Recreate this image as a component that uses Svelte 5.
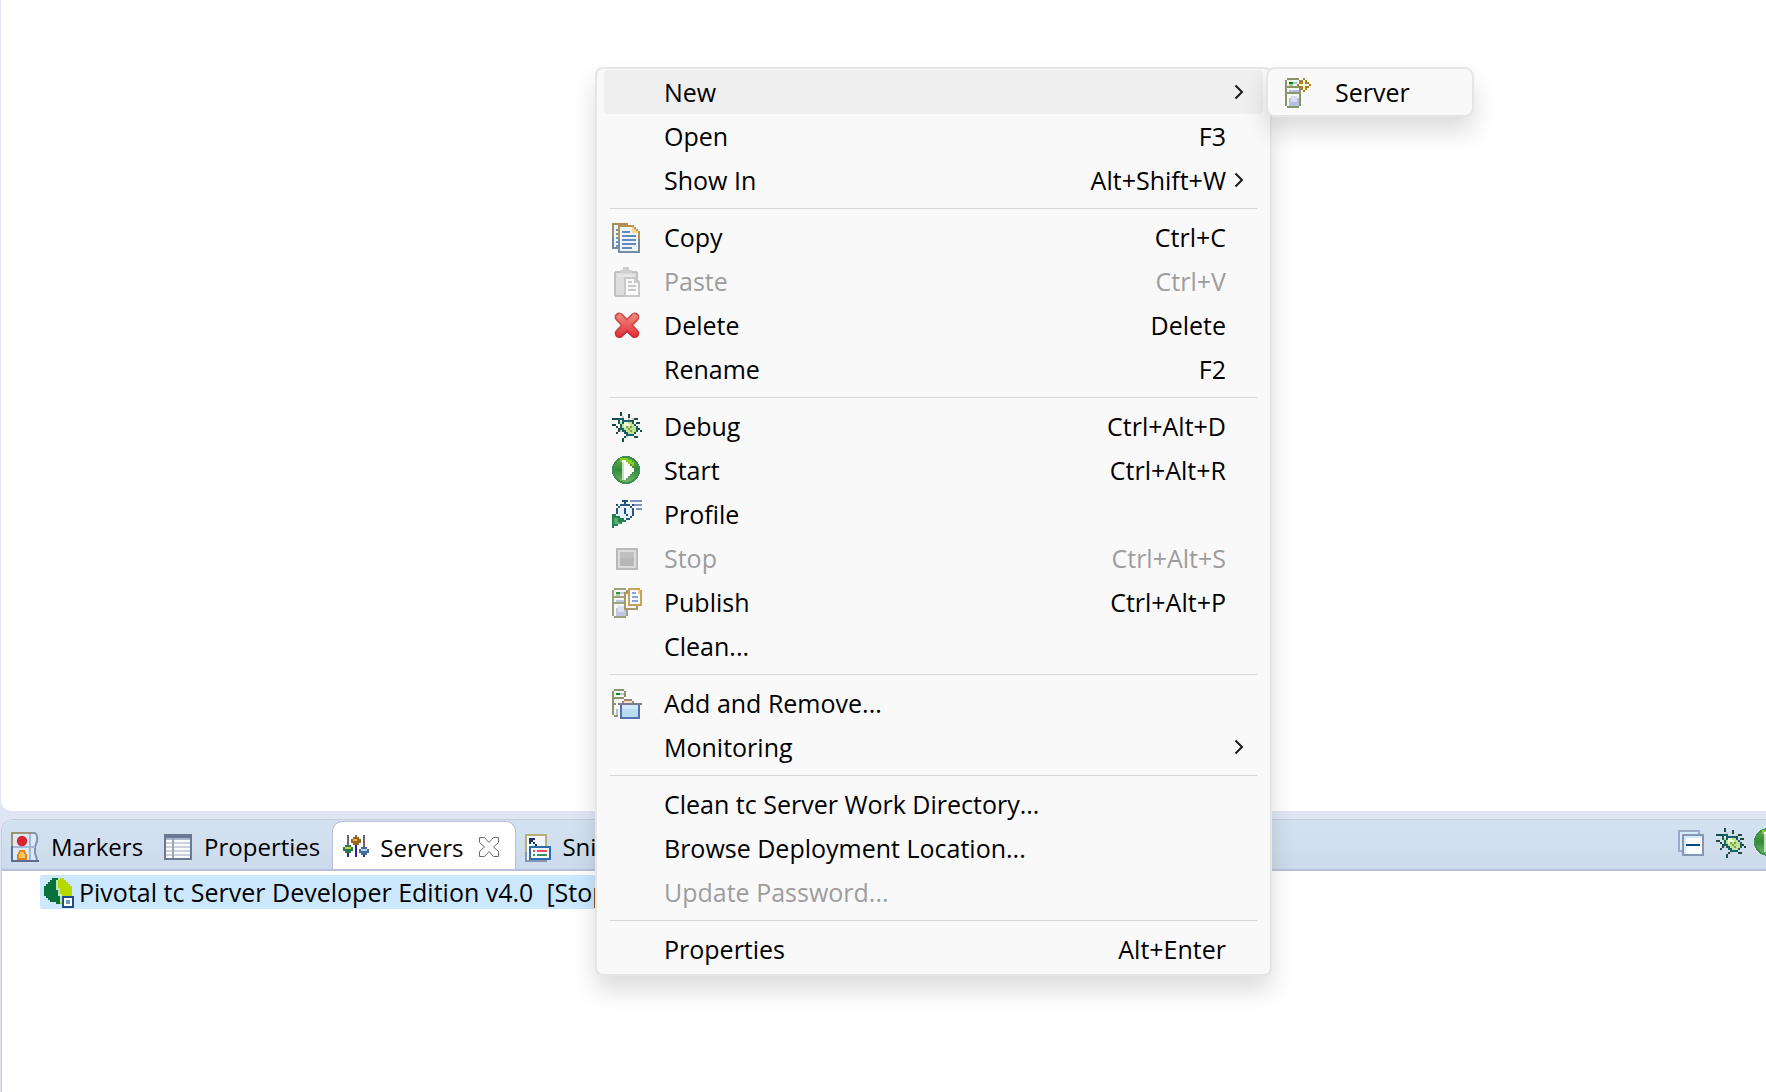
<script>
  const groups = [
    [
      { label: 'New', sub: true, active: true },
      { label: 'Open', key: 'F3' },
      { label: 'Show In', key: 'Alt+Shift+W', sub: true }
    ],
    [
      { label: 'Copy', key: 'Ctrl+C', icon: 'copy' },
      { label: 'Paste', key: 'Ctrl+V', icon: 'paste', disabled: true },
      { label: 'Delete', key: 'Delete', icon: 'delete' },
      { label: 'Rename', key: 'F2' }
    ],
    [
      { label: 'Debug', key: 'Ctrl+Alt+D', icon: 'bug' },
      { label: 'Start', key: 'Ctrl+Alt+R', icon: 'start' },
      { label: 'Profile', icon: 'profile' },
      { label: 'Stop', key: 'Ctrl+Alt+S', icon: 'stop', disabled: true },
      { label: 'Publish', key: 'Ctrl+Alt+P', icon: 'publish' },
      { label: 'Clean...' }
    ],
    [
      { label: 'Add and Remove...', icon: 'modules' },
      { label: 'Monitoring', sub: true }
    ],
    [
      { label: 'Clean tc Server Work Directory...' },
      { label: 'Browse Deployment Location...' },
      { label: 'Update Password...', disabled: true }
    ],
    [{ label: 'Properties', key: 'Alt+Enter' }]
  ];
  const tabs = [
    { label: 'Markers', icon: 'markers' },
    { label: 'Properties', icon: 'properties' },
    { label: 'Servers', icon: 'servers', active: true },
    { label: 'Snippets', icon: 'snippets' }
  ];
</script>

{#snippet tower()}
  <path fill="#8b946c" d="M1 1h6v1h1v13H7v1H1v-1H0V2h1z" />
  <path fill="#f6f8f4" d="M1 2h6v3H1zM1 6h6v2H1zM1 9h6v6H1z" />
  <path fill="#0a8a12" d="M2 3h2v1H2z" />
  <path fill="#9fd0a4" d="M2 4h2v1H2z" />
  <path fill="#b5bfe0" d="M4 3h2v1H4zM2 7h5v1H2zM2 11h5v4H2z" />
  <path fill="#d7dcf1" d="M3 10h3v3H3z" />
{/snippet}

{#snippet icon(name)}
  <svg class="icon" viewBox="0 0 16 16" aria-hidden="true">
    {#if name === 'copy'}
      <path fill="#a9905b" d="M0 1h8v2H0z" /><path fill="#9a9078" d="M0 2h1v6H0z" />
      <path fill="#7189a6" d="M0 8h1v6H0zM0 13h4v1H0z" /><path fill="#eef6fb" d="M1 2h3v11H1z" />
      <path fill="#6d91bd" d="M2 4h1v1H2zM2 6h1v1H2zM2 8h1v1H2zM2 10h1v1H2zM2 12h1v1H2z" />
      <path fill="#b5944f" d="M3 2h8v1h1v1h1v1h1v4H3z" /><path fill="#748ba7" d="M3 9h11v7H3z" />
      <path fill="#eef6fb" d="M4 3h6v3h3v9H4z" /><path fill="#f3d98c" d="M10 3h1v1h1v1h1v1h-3z" />
      <path fill="#6488bb" d="M5 5h4v1H5zM5 7h7v1H5zM5 9h7v1H5zM5 11h7v1H5zM5 13h5v1H5z" />
    {:else if name === 'paste'}
      <rect x="1.5" y="3.5" width="11" height="12" rx=".8" fill="#dedede" stroke="#c1c1c1" />
      <path fill="#cecece" d="M4 4V2.5h1.5V1.2h3v1.3H10V4z" /><path fill="#e9e9e9" d="M3 5h8v1H3z" />
      <path fill="#fafafa" stroke="#c8c8c8" d="M6.5 6.5h5l2 2v7h-7z" />
      <path fill="#c8c8c8" d="M11 6h1v2h2v1h-3zM8 8h2v1H8zM8 10h4v1H8zM8 12h4v1H8z" />
    {:else if name === 'delete'}
      <defs><linearGradient id="red" x2="0" y2="1"><stop stop-color="#f28a83" /><stop offset="1" stop-color="#e2323a" /></linearGradient></defs>
      <g shape-rendering="auto">
        <path stroke="#cb4a43" stroke-width="4.6" stroke-linecap="round" d="m3.6 4 7.8 8.2M11.4 4 3.6 12.2" />
        <path fill="#cf2a35" d="m9.6 8.2 4 3.4-1 2.4-2 .5-3.1-2.8-3 2.8-2-.4-1-2.3 4-3.6z" />
        <path fill="url(#red)" d="M3.4 2.4h.8l3.3 3.5 3.3-3.5h.8l1.3 1.3v.8L9.6 8.1l3.3 3.4v.9l-1.3 1.3h-.8L7.5 10.3l-3.3 3.4h-.8l-1.3-1.3v-.9l3.3-3.4-3.3-3.6v-.8z" />
      </g>
    {:else if name === 'bug'}
      <path fill="#dccaca" d="M5 3h1v1H5zM8 4h1v1H8zM12 6h1v1h-1zM4 10h1v1H4zM7 13h1v1H7zM10 4h1v1h-1z" />
      <path fill="#1d4a40" d="M4 1h1v2H4zM8 2h1v2H8zM0 4h3v1H0zM11 4h2v1h-2zM10 5h1v1h-1zM0 7h2v1H0zM2 8h1v1H2zM12 6h2v1h-2zM3 9h1v2H3zM2 11h1v1H2zM13 9h1v1h-1zM14 10h1v1h-1zM11 13h2v1h-2zM6 13h1v1H6zM5 14h1v2H5z" />
      <path fill="#15616b" d="M3 4h3v1h4v1h1v1h1v1h1v3h-1v1h-1v1H7v-1H6v-1H5v-1H4V7H3z" />
      <path fill="#c5e08f" d="M4 5h1v2H4zM6 6h4v1h1v1h1v3h-1v1H8v-1H7v-1H6V9H5V7h1z" />
      <path fill="#eaf5d2" d="M4 5h1v1H4zM6 6h2v1h1v1H8v1H6z" />
      <path fill="#72a64d" d="M7 8h1v1H7zM8 9h1v1H8zM9 10h1v1H9zM9 8h1v1H9z" />
    {:else if name === 'start'}
      <defs><linearGradient id="green" x2="0" y2="1"><stop stop-color="#6cac4c" /><stop offset=".5" stop-color="#338a39" /><stop offset="1" stop-color="#72bb6c" /></linearGradient></defs>
      <circle cx="7" cy="8" r="6.5" fill="url(#green)" stroke="#3d8f4f" />
      <path fill="#86cf21" d="M4 2h4v1h2v1h1v2h-1V5H8V4H7V3H5v1H4z" />
      <path fill="#fff" d="M5 3h2v1h1v1h1v1h1v1h1v2h-1v1H9v1H8v1H7v1H5z" />
      <path fill="#c9dfc4" d="M5 4h1v9H5z" />
    {:else if name === 'profile'}
      <path fill="#e6f2fd" d="M4 4h5v1h1v5H9v1H4V9H3V5h1z" />
      <path fill="#2a5585" d="M4 3h5v1H4zM3 4h1v1H3zM9 4h1v1H9zM2 5h1v3H2zM10 5h1v4h-1zM9 9h1v1H9zM7 10h2v1H7z" />
      <path fill="#204b7d" d="M5 1h3v1H5zM6 2h1v1H6zM2 3h1v1H2zM10 3h1v1h-1zM6 5h1v3H6zM7 8h1v1H7z" />
      <path fill="#7a94c4" d="M9 1h6v1H9zM11 3h4v1h-4zM12 5h3v1h-3z" />
      <path fill="#23814a" d="M0 8h2v1h2v1h2v1h1v1H5v1H3v1H1v1H0z" /><path fill="#57ac74" d="M1 10h2v2h1v1H1z" />
    {:else if name === 'stop'}
      <path fill="#b9b9b9" d="M2 3h11v11H2z" /><path fill="#dcdcdc" d="M3 4h9v9H3z" /><path fill="#b7b7b7" d="M4 5h7v7H4z" />
      <path fill="#c0c0c0" d="M4 5h7v3H4z" />
    {:else if name === 'publish'}
      <g opacity=".85">{@render tower()}</g>
      <path fill="#ab9668" d="M6 3h7v9H6z" /><path fill="#f8fafc" d="M7 4h5v7H7z" />
      <path fill="#c4a45a" d="M8 1h6v1h1v8H8z" /><path fill="#f7fafe" d="M9 2h4v1h1v6H9z" />
      <path fill="#f0cc70" d="M13 2h1v2h-1z" /><path fill="#8aa5d2" d="M10 3h2v1h-2zM10 5h3v1h-3zM10 7h3v1h-3z" />
    {:else if name === 'modules'}
      <path fill="#8b946c" d="M1 1h5v1h1v3H2v4H1v5h2v1H1v-1H0V2h1z" /><path fill="#f6f8f4" d="M1 2h5v3H1zM1 6h3v2H1zM1 9h2v5H1z" />
      <path fill="#0a8a12" d="M2 3h2v1H2z" /><path fill="#b5bfe0" d="M4 3h2v1H4zM2 11h1v3H2z" />
      <path fill="#8b946c" d="M2 5h4v1H2z" />
      <path fill="#9d8479" d="M6 6h4v1h1v1H5V7h1z" /><path fill="#f6dcbc" d="M6 7h4v1H6z" />
      <path fill="#7b7b93" d="M3 8h12v1H3z" /><path fill="#5470b4" d="M4 9h10v7H4z" />
      <path fill="#b9dcf1" d="M5 9h8v6H5z" /><path fill="#d2e8f6" d="M5 9h8v2H5z" />
    {:else if name === 'new-server'}
      {@render tower()}
      <path fill="#ae8317" d="M9 1h1v1h1v1h1v1h1v1h-1v1h-1v1h-1v1H9V7H8V6H7V5H6V4h1V3h1V2h1z" />
      <path fill="#fffbe7" d="M9 2h1v2h2v1h-2v2H9V5H7V4h2z" />
    {:else if name === 'markers'}
      <path fill="#dceaf8" d="M1 2h12l-1 5 1 8H1z" /><path fill="#9b9670" d="M0 1h11v1H1v6H0z" />
      <path fill="#606b8f" d="M0 8h1v7h13v1H0z" /><path fill="none" stroke="#8391b4" shape-rendering="auto" d="M10 1.5h2q1.5 1 1 4l-1 3v3l1 3.5" />
      <path fill="#a4b7d5" d="M9 2h1v13H9zM1 8h11v1H1z" /><circle cx="5.5" cy="5.5" r="2.6" fill="#da2530" shape-rendering="auto" />
      <path fill="#fac858" stroke="#df8620" d="M3.5 14.5v-2l1-2h2l1 2v2z" />
    {:else if name === 'properties'}
      <path fill="#6a7890" d="M0 2h14v13H0z" /><path fill="#aab7cf" d="M1 4h12v1H1z" /><path fill="#fafbfd" d="M1 5h12v9H1z" />
      <path fill="#ccd2dc" d="M1 6h12v1H1zM1 8h12v1H1zM1 10h12v1H1zM1 12h12v1H1z" /><path fill="#9aa6ba" d="M4 4h1v10H4z" />
    {:else if name === 'servers'}
      <path fill="#735f74" d="M2 2h1v5H2zM6 2h1v2H6zM10 2h1v6h-1z" /><path fill="#2525a0" d="M2 10h1v3H2zM6 7h1v6H6zM10 12h1v1h-1z" />
      <path fill="#2d774e" d="M1 7h3v1h1v2H4v1H1v-1H0V8h1z" /><path fill="#b9d74b" d="M1 8h3v1H1z" />
      <path fill="#97671b" d="M5 3h3v1h1v2H8v1H5V6H4V4h1z" /><path fill="#e7b94d" d="M5 4h2v1H5z" />
      <path fill="#47699e" d="M9 8h3v1h1v2h-1v1H9v-1H8V9h1z" /><path fill="#abd8ee" d="M9 9h3v1H9z" />
    {:else if name === 'snippets'}
      <path fill="#b6ae7d" d="M0 2h11v6h-1V3H1v12H0z" /><path fill="#8393b3" d="M0 11h1v4h10v1H0z" /><path fill="#f1f7fc" d="M1 3h9v12H1z" />
      <path fill="#1e3260" d="M2 4h3v1H4v1h1v1h1v1H5V7H4V6H3v1H2zM6 8h1v1H6z" />
      <path fill="#2e6dad" d="M2 8h11v7H2z" /><path fill="#f7fbff" d="M3 9h9v5H3z" />
      <path fill="#e45360" d="M4 10h1v1H4zM6 10h5v1H6z" /><path fill="#33915b" d="M4 12h1v1H4zM6 12h5v1H6z" />
    {:else if name === 'collapse'}
      <path fill="#9ca8c6" d="M0 2h11v11H0z" /><path fill="#d4eefd" d="M1 3h9v9H1z" />
      <path fill="#8795b2" d="M2 4h11v11H2z" /><path fill="#d4edfd" d="M3 5h9v9H3z" /><path fill="#fafdff" d="M4 6h8v8H4z" />
      <path fill="#054582" d="M4 9h7v1H4z" />
    {:else if name === 'pivotal'}
      <path fill="#08713c" d="M4 1h3v1H6v5h1v3h1v4H6v-1H3v-1H2v-1H1v-1H0V5h1V4h1V3h1V2h1z" />
      <path fill="#bfe3c1" d="M7 1h1v1H7v4h1v4h1v3H8v-3H7V7H6V2h1z" />
      <path fill="#b5d900" d="M8 1h2v1h1v1h1v1h1v1h1v5h-3v1h-1v3H8v-1h1V9H8V6H7V2h1z" />
      <path fill="#1d4d90" d="M9 10h6v6H9z" /><path fill="#fff" d="M10 11h4v4h-4z" /><path fill="#6d93c7" d="M11 12h2v2h-2z" />
    {/if}
  </svg>
{/snippet}

{#snippet chevron()}
  <svg class="chevron" viewBox="0 0 10 16" aria-hidden="true"><path d="m1.5 1.5 6.5 6.5-6.5 6.5" /></svg>
{/snippet}

<main class="workbench">
  <section class="editor" aria-label="Editor area"></section>

  <section class="views">
    <header class="tabbar">
      <div class="tabs" role="tablist">
        {#each tabs as tab}
          <div class="tab" class:current={tab.active}>
            <button class="tab-button" role="tab" aria-selected={!!tab.active}>
              {@render icon(tab.icon)}<span class="tab-label">{tab.label}</span>
            </button>
            {#if tab.active}
              <button class="close" aria-label="Close Servers">
                <svg viewBox="0 0 20 20" aria-hidden="true"><path d="M.5.5h5l4.5 5 4.5-5h5v5l-5 4.5 5 4.5v5h-5l-4.5-5-4.5 5h-5v-5l5-4.5-5-4.5z" /></svg>
              </button>
            {/if}
          </div>
        {/each}
      </div>
      <div class="toolbar">
        <button aria-label="Collapse All">{@render icon('collapse')}</button>
        <button aria-label="Debug server">{@render icon('bug')}</button>
        <button aria-label="Start server">{@render icon('start')}</button>
      </div>
    </header>
    <div class="tree">
      <button class="server">{@render icon('pivotal')}<span class="server-name">Pivotal tc Server Developer Edition v4.0&nbsp; [Stopped]</span></button>
    </div>
  </section>

  <div class="menu popup" role="menu">
    {#each groups as group, i}
      {#if i > 0}<hr />{/if}
      {#each group as item}
        <button class="item" class:hover={item.active} role="menuitem" disabled={item.disabled}>
          <span class="slot">{#if item.icon}{@render icon(item.icon)}{/if}</span>
          <span class="label">{item.label}</span>
          <span class="key">{item.key ?? ''}</span>
          <span class="arrow">{#if item.sub}{@render chevron()}{/if}</span>
        </button>
      {/each}
    {/each}
  </div>

  <div class="submenu popup" role="menu">
    <button class="item" role="menuitem">
      <span class="slot">{@render icon('new-server')}</span>
      <span class="label">Server</span>
    </button>
  </div>
</main>

<style>
  :global(body) { margin: 0; }
  .workbench {
    position: relative;
    display: flex;
    flex-direction: column;
    min-height: 100vh;
    overflow: hidden;
    background: #e0e5f5;
    color: #000;
    font-family: "Open Sans", "Noto Sans", sans-serif;
    font-size: 25px;
    line-height: 32px;
  }
  button {
    margin: 0;
    padding: 0;
    border: 0;
    background: none;
    color: inherit;
    font: inherit;
    text-align: left;
    white-space: nowrap;
  }
  .icon {
    display: block;
    flex: none;
    width: 32px;
    height: 32px;
    shape-rendering: crispEdges;
  }
  .editor {
    flex: 1;
    margin: 0 0 8px 1px;
    border-bottom-left-radius: 10px;
    background: #fff;
  }
  .views {
    display: flex;
    flex-direction: column;
    min-height: 273px;
    margin-left: 1px;
    box-sizing: border-box;
    border-top: 1px solid #c5cdd5;
    border-left: 1px solid #c3cadd;
    border-top-left-radius: 12px;
    overflow: hidden;
    background: #fff;
  }
  .tabbar {
    display: flex;
    justify-content: space-between;
    height: 51px;
    box-sizing: border-box;
    border-bottom: 2px solid #b9c1da;
    background: linear-gradient(#d3e2f0, #cddaeb);
  }
  .tabs { display: flex; max-width: 594px; overflow: hidden; font-size: 24px; }
  .tab {
    display: flex;
    flex: none;
    align-items: center;
    padding: 0 12px 0 9px;
    height: 51px;
    box-sizing: border-box;
  }
  .tab:last-child { flex: 0 1 auto; min-width: 0; padding-right: 0; }
  .current {
    height: 50px;
    margin-top: 1px;
    padding: 0 16px 0 10px;
    border: 1px solid #b6bed5;
    border-bottom: 0;
    border-radius: 10px 10px 0 0;
    background: #fff;
  }
  .tab-button { display: flex; align-items: center; gap: 8px; min-width: 0; }
  .current .tab-button, .tab:last-child .tab-button { gap: 5px; }
  .tab-label { padding-top: 3px; overflow: hidden; }
  .close { width: 20px; height: 20px; margin-left: 16px; }
  .close svg { display: block; width: 20px; height: 20px; fill: #fff; stroke: #6b6b6b; }
  .toolbar {
    display: flex;
    align-items: flex-start;
    gap: 6px;
    margin-right: -20px;
    padding-top: 6px;
  }
  .tree { padding: 4px 0 0 38px; }
  .server {
    display: flex;
    align-items: center;
    gap: 3px;
    height: 34px;
    max-width: 556px;
    padding: 0 0 0 4px;
    border-radius: 2px;
    background: #cce8ff;
  }
  .server-name { overflow: hidden; }
  .popup {
    position: absolute;
    top: 67px;
    box-sizing: border-box;
    border: 2px solid #e5e5e5;
    border-radius: 8px;
    background: #f9f9f9;
    box-shadow: 0 14px 24px rgb(0 0 0 / 14%);
  }
  .menu { left: 595px; width: 677px; padding: 1px 7px 3px; }
  .submenu { left: 1266px; width: 208px; padding: 1px 7px; border-radius: 9px; }
  .item {
    display: flex;
    align-items: center;
    width: 100%;
    height: 44px;
    padding: 0 11px 0 8px;
    border-radius: 4px;
  }
  .submenu .item { padding-left: 10px; }
  .hover { background: #efefef; }
  .item:disabled { color: #9d9d9d; }
  .slot { flex: none; width: 52px; }
  .submenu .slot { width: 50px; }
  .label { flex: 1; }
  .arrow { flex: none; width: 26px; }
  .chevron { display: block; width: 10px; height: 16px; margin-left: 8px; fill: none; stroke: #1a1a1a; stroke-width: 2; }
  hr { height: 1px; margin: 6px; border: 0; background: #d6d6d6; }
</style>
